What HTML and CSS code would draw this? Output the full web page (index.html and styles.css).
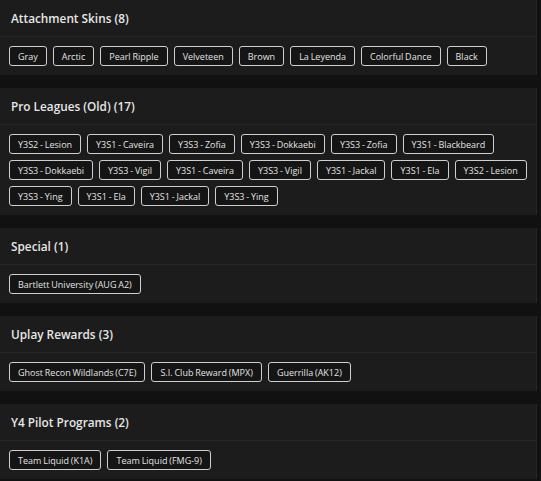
FILE: index.html
```html
<!DOCTYPE html>
<html lang="en">
<head>
  <meta charset="UTF-8">
  <title>Skins</title>
  <link rel="stylesheet" href="styles.css">
</head>
<body>
  <div class="lista">

    <section class="tarjeta">
      <h2 class="titulo">Attachment Skins (8)</h2>
      <div class="chips">
        <span class="chip">Gray</span>
        <span class="chip">Arctic</span>
        <span class="chip">Pearl Ripple</span>
        <span class="chip">Velveteen</span>
        <span class="chip">Brown</span>
        <span class="chip">La Leyenda</span>
        <span class="chip">Colorful Dance</span>
        <span class="chip">Black</span>
      </div>
    </section>

    <section class="tarjeta">
      <h2 class="titulo">Pro Leagues (Old) (17)</h2>
      <div class="chips">
        <span class="chip">Y3S2 - Lesion</span>
        <span class="chip">Y3S1 - Caveira</span>
        <span class="chip">Y3S3 - Zofia</span>
        <span class="chip">Y3S3 - Dokkaebi</span>
        <span class="chip">Y3S3 - Zofia</span>
        <span class="chip">Y3S1 - Blackbeard</span>
        <span class="chip">Y3S3 - Dokkaebi</span>
        <span class="chip">Y3S3 - Vigil</span>
        <span class="chip">Y3S1 - Caveira</span>
        <span class="chip">Y3S3 - Vigil</span>
        <span class="chip">Y3S1 - Jackal</span>
        <span class="chip">Y3S1 - Ela</span>
        <span class="chip">Y3S2 - Lesion</span>
        <span class="chip">Y3S3 - Ying</span>
        <span class="chip">Y3S1 - Ela</span>
        <span class="chip">Y3S1 - Jackal</span>
        <span class="chip">Y3S3 - Ying</span>
      </div>
    </section>

    <section class="tarjeta">
      <h2 class="titulo">Special (1)</h2>
      <div class="chips">
        <span class="chip">Bartlett University (AUG A2)</span>
      </div>
    </section>

    <section class="tarjeta">
      <h2 class="titulo">Uplay Rewards (3)</h2>
      <div class="chips">
        <span class="chip">Ghost Recon Wildlands (C7E)</span>
        <span class="chip">S.I. Club Reward (MPX)</span>
        <span class="chip">Guerrilla (AK12)</span>
      </div>
    </section>

    <section class="tarjeta">
      <h2 class="titulo">Y4 Pilot Programs (2)</h2>
      <div class="chips">
        <span class="chip">Team Liquid (K1A)</span>
        <span class="chip">Team Liquid (FMG-9)</span>
      </div>
    </section>

  </div>
</body>
</html>
```

FILE: styles.css
```css
body {
  margin: 0;
  background: #111111;
  font-family: 'Open Sans', 'Noto Sans', sans-serif;
  color: #e4e4e4;
}

.lista {
  display: flex;
  flex-direction: column;
  gap: 13px;
  width: 537px;
}

.tarjeta {
  background: #1c1c1c;
  border-right: 1px solid #242424;
}

.titulo {
  margin: 0;
  height: 37px;
  box-sizing: border-box;
  padding: 0 11px;
  display: flex;
  align-items: center;
  font-size: 11.8px;
  font-weight: 600;
  color: #e6e6e6;
  border-bottom: 1px solid #272727;
}

.chips {
  display: flex;
  flex-wrap: wrap;
  gap: 6px;
  padding: 9px 9px 9px;
}

.chip {
  height: 20px;
  box-sizing: border-box;
  padding: 0 8px;
  display: flex;
  align-items: center;
  font-size: 9px;
  word-spacing: -0.5px;
  color: #e2e2e2;
  background: #151515;
  border: 1.5px solid #cfcfcf;
  border-radius: 3px;
}
```
